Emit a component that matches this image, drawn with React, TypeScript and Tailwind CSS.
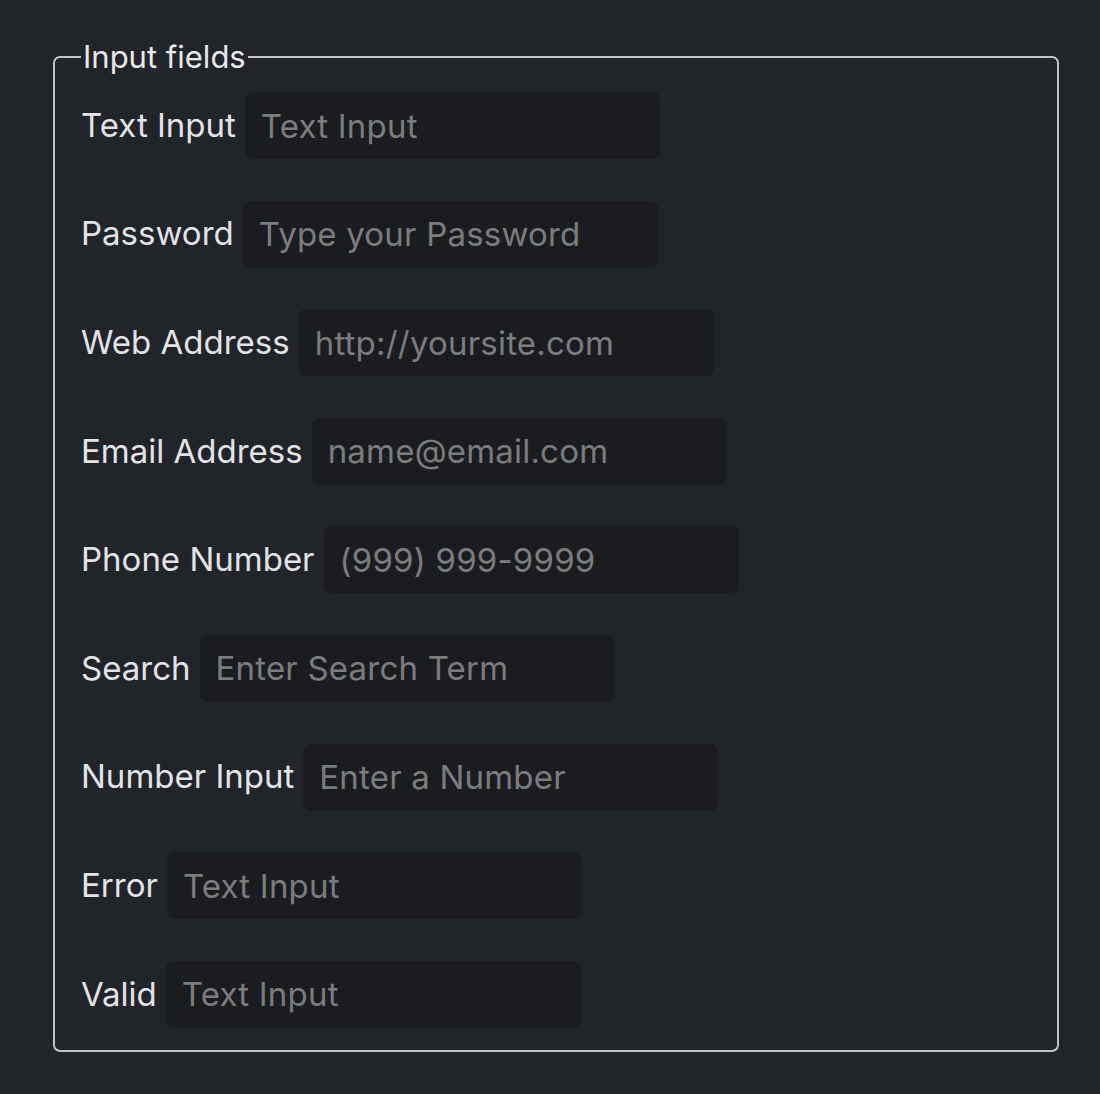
import React from 'react';

type Field = {
  label: string;
  type: string;
  placeholder: string;
};

const fields: Field[] = [
  { label: 'Text Input', type: 'text', placeholder: 'Text Input' },
  { label: 'Password', type: 'password', placeholder: 'Type your Password' },
  { label: 'Web Address', type: 'url', placeholder: 'http://yoursite.com' },
  { label: 'Email Address', type: 'email', placeholder: 'name@email.com' },
  { label: 'Phone Number', type: 'tel', placeholder: '(999) 999-9999' },
  { label: 'Search', type: 'search', placeholder: 'Enter Search Term' },
  { label: 'Number Input', type: 'number', placeholder: 'Enter a Number' },
  { label: 'Error', type: 'text', placeholder: 'Text Input' },
  { label: 'Valid', type: 'text', placeholder: 'Text Input' },
];

export default function App() {
  return (
    <div className="min-h-[1094px] w-full bg-[#212429] px-[53px] pt-[38px] font-['Inter','Noto_Sans',sans-serif] text-[33px] text-[#e1e3e6]">
      <fieldset className="w-[1006px] rounded-[7px] border-2 border-[#c2c2c2] px-[26px] pb-[22px] pt-[16px]">
        <legend className="px-[2px] text-[31px] leading-[38px] text-[#e8e9eb]">Input fields</legend>
        <div className="flex flex-col gap-[41.6px]">
          {fields.map((f, i) => (
            <div key={i} className="flex items-center gap-[9px]">
              <label htmlFor={`field-${i}`} className="whitespace-nowrap">
                {f.label}
              </label>
              <input
                id={`field-${i}`}
                type={f.type}
                placeholder={f.placeholder}
                className="h-[67px] w-[415px] rounded-[8px] bg-[#1b1c1f] px-[16px] text-[33px] tracking-[0.2px] text-[#e1e3e6] outline-none placeholder:text-[#7b7c7e] [appearance:textfield]"
              />
            </div>
          ))}
        </div>
      </fieldset>
    </div>
  );
}
